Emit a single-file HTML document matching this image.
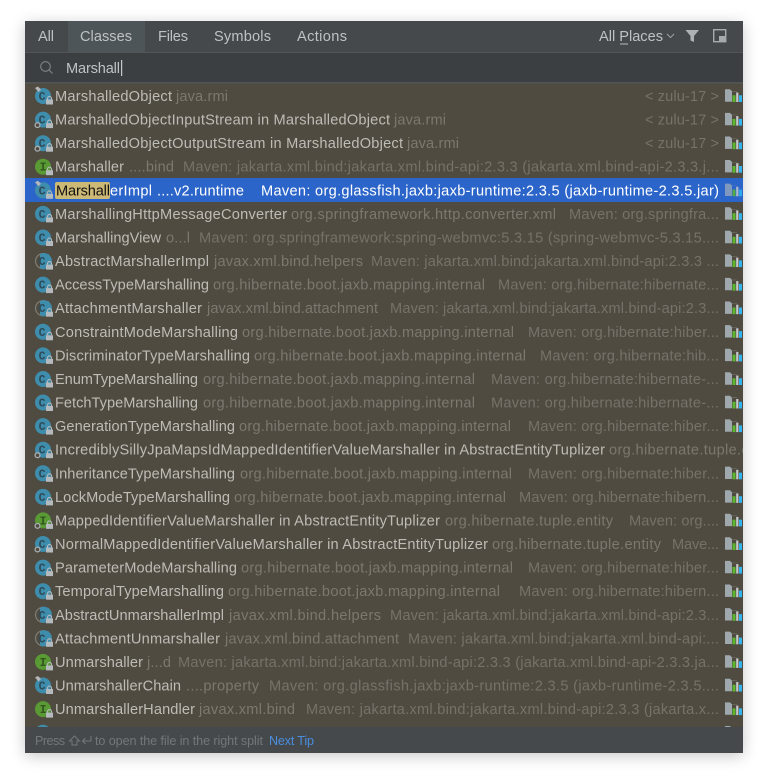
<!DOCTYPE html>
<html><head><meta charset="utf-8"><title>Search Everywhere</title>
<style>
html,body{margin:0;padding:0;background:#fff;width:768px;height:782px;overflow:hidden}
#w{position:absolute;left:25px;top:21px;width:718px;height:732px;background:#504b40;box-shadow:0 3px 14px rgba(0,0,0,.22)}
svg{position:absolute;left:0;top:0;filter:blur(.35px)}
text{font-family:"Liberation Sans",sans-serif;font-size:14.6px}
.t{fill:#bfc2c3}.n{fill:#bebcb6}.p{fill:#7b7870}.m{fill:#75726a}.w{fill:#fff}.k{fill:#111}
.f{font-size:12.6px;fill:#73777a}
</style></head><body><div id="w"></div>
<svg width="768" height="782" viewBox="0 0 768 782" xmlns="http://www.w3.org/2000/svg">
<defs>
<clipPath id="cp"><rect x="25" y="83" width="718" height="644"/></clipPath>
<g id="lk"><path d="M47.5 3.5v-1a2 2 0 0 1 4 0v1" fill="none" stroke="#b4babd" stroke-width="1.1"/><rect x="46" y="3.5" width="7" height="5" fill="#b4babd"/></g>
<g id="c"><circle cx="43" cy="0" r="8" fill="#3f8dac"/><text x="38.6" y="4" style="font-size:11.5px;font-family:'Liberation Mono',monospace;font-weight:bold" fill="#2d4a58">C</text><use href="#lk"/></g>
<g id="i"><circle cx="43" cy="0" r="8" fill="#5a9a35"/><text x="39.6" y="4" style="font-size:11.5px;font-family:'Liberation Mono',monospace;font-weight:bold" fill="#33551e">I</text><use href="#lk"/></g>
<g id="a"><circle cx="43" cy="0" r="7.5" fill="none" stroke="#7d7d78" stroke-width="1.2"/><path d="M41 -8h3a8 8 0 0 1 0 16h-3z" fill="#3f8dac"/><rect x="40" y="-7" width="9" height="14" fill="#3f8dac"/><text x="38.6" y="4" style="font-size:11.5px;font-family:'Liberation Mono',monospace;font-weight:bold" fill="#2d4a58">C</text><use href="#lk"/></g>
<path id="tg" d="M35 -8l3-1.5 3 3-2.5 2.5z" fill="#b4b8ba"/>
<g id="dt"><circle cx="37.5" cy="5.5" r="2.4" fill="#504b40" stroke="#a9afb3" stroke-width="1.3"/></g>
<g id="fo"><path d="M725 -6.700h5l2 2h5v10.400h-12z" fill="#9ea8ad"/><rect x="732" y="-4.500" width="10" height="10.500" fill="#504b40"/><rect x="732.500" y="-.7" width="3" height="6.700" fill="#5cb82e"/><rect x="736.200" y="-3.500" width="2.200" height="9.500" fill="#c8cbcc"/><rect x="739" y="-.7" width="3" height="6.700" fill="#2fb4f0"/></g>
</defs>

<!-- header -->
<rect x="25" y="21" width="718" height="31" fill="#45494b"/>
<rect x="68" y="21" width="77" height="31" fill="#4e5558"/>
<rect x="25" y="52" width="718" height="1.5" fill="#515557"/>
<rect x="25" y="53" width="718" height="29" fill="#3b3f42"/>
<rect x="25" y="82" width="718" height="1.5" fill="#505457"/>
<text class="t" x="38" y="41" textLength="16">All</text>
<text class="t" x="80" y="41" textLength="52">Classes</text>
<text class="t" x="158" y="41" textLength="30">Files</text>
<text class="t" x="214" y="41" textLength="57">Symbols</text>
<text class="t" x="297" y="41" textLength="50">Actions</text>
<text class="t" x="599" y="41" textLength="64">All Places</text>
<rect x="620" y="43.5" width="8" height="1" fill="#b9bcbd"/>
<path d="M667 34l3.500 3.500 3.500-3.500" fill="none" stroke="#9a9ea0" stroke-width="1.100"/>
<path d="M685.500 30h13.500l-5 6v6l-3.500-1.500v-4.500z" fill="#aeb2b4"/>
<rect x="713.700" y="29.700" width="12" height="12" fill="none" stroke="#a6aaac" stroke-width="1.400"/>
<rect x="719" y="36" width="6" height="5" fill="#a6aaac"/>

<!-- search -->
<circle cx="45.500" cy="66.500" r="4.800" fill="none" stroke="#7e8285" stroke-width="1.100"/>
<path d="M49 70l3.500 3.500" stroke="#7e8285" stroke-width="1.200"/>
<text class="t" x="66" y="73" textLength="54">Marshall</text>
<rect x="121" y="60" width="1.200" height="16" fill="#c5c8c9"/>

<!-- selection -->
<rect x="25" y="178" width="718" height="24" fill="#2c65c9"/>
<rect x="55" y="182" width="55" height="17" rx="2" fill="#cdb976"/>

<g clip-path="url(#cp)">
<g transform="translate(0,96)"><use href="#c"/><use href="#tg"/><text class="n" x="55" y="5" textLength="117">MarshalledObject</text><text class="p" x="176" y="5" textLength="52">java.rmi</text><text class="m" x="645" y="5" textLength="74">&lt; zulu-17 &gt;</text><use href="#fo"/></g>
<g transform="translate(0,119.6)"><use href="#c"/><use href="#dt"/><text class="n" x="55" y="5" textLength="335">MarshalledObjectInputStream in MarshalledObject</text><text class="p" x="394" y="5" textLength="52">java.rmi</text><text class="m" x="645" y="5" textLength="74">&lt; zulu-17 &gt;</text><use href="#fo"/></g>
<g transform="translate(0,143.2)"><use href="#c"/><use href="#dt"/><text class="n" x="55" y="5" textLength="348">MarshalledObjectOutputStream in MarshalledObject</text><text class="p" x="407" y="5" textLength="52">java.rmi</text><text class="m" x="645" y="5" textLength="74">&lt; zulu-17 &gt;</text><use href="#fo"/></g>
<g transform="translate(0,166.7)"><use href="#i"/><text class="n" x="55" y="5" textLength="69">Marshaller</text><text class="p" x="129" y="5" textLength="45">....bind</text><text class="m" x="183" y="5" textLength="536">Maven: jakarta.xml.bind:jakarta.xml.bind-api:2.3.3 (jakarta.xml.bind-api-2.3.3.j...</text><use href="#fo"/></g>
<g transform="translate(0,190.3)"><use href="#c"/><use href="#tg"/><text class="k" x="56" y="5" textLength="54">Marshall</text><text class="w" x="110" y="5" textLength="42">erImpl</text><text class="w" x="157" y="5" textLength="87">....v2.runtime</text><text class="w" x="261" y="5" textLength="458">Maven: org.glassfish.jaxb:jaxb-runtime:2.3.5 (jaxb-runtime-2.3.5.jar)</text><g opacity=".85"><path d="M725 -6.700h5l2 2h5v10.400h-12z" fill="#8ea2bd"/><rect x="732" y="-4.500" width="10" height="10.500" fill="#2c65c9"/><rect x="732.500" y="-.7" width="3" height="6.700" fill="#5cb82e"/><rect x="736.200" y="-3.500" width="2.200" height="9.500" fill="#c8cbcc"/><rect x="739" y="-.7" width="3" height="6.700" fill="#2fb4f0"/></g></g>
<g transform="translate(0,213.9)"><use href="#c"/><text class="n" x="55" y="5" textLength="232">MarshallingHttpMessageConverter</text><text class="p" x="291" y="5" textLength="265">org.springframework.http.converter.xml</text><text class="m" x="569" y="5" textLength="150">Maven: org.springfra...</text><use href="#fo"/></g>
<g transform="translate(0,237.5)"><use href="#c"/><text class="n" x="55" y="5" textLength="106">MarshallingView</text><text class="p" x="166" y="5" textLength="24">o...l</text><text class="m" x="199" y="5" textLength="520">Maven: org.springframework:spring-webmvc:5.3.15 (spring-webmvc-5.3.15....</text><use href="#fo"/></g>
<g transform="translate(0,261.1)"><use href="#a"/><text class="n" x="55" y="5" textLength="154">AbstractMarshallerImpl</text><text class="p" x="214" y="5" textLength="149">javax.xml.bind.helpers</text><text class="m" x="371" y="5" textLength="348">Maven: jakarta.xml.bind:jakarta.xml.bind-api:2.3.3 ...</text><use href="#fo"/></g>
<g transform="translate(0,284.6)"><use href="#c"/><text class="n" x="55" y="5" textLength="154">AccessTypeMarshalling</text><text class="p" x="213" y="5" textLength="272">org.hibernate.boot.jaxb.mapping.internal</text><text class="m" x="498" y="5" textLength="221">Maven: org.hibernate:hibernate...</text><use href="#fo"/></g>
<g transform="translate(0,308.2)"><use href="#a"/><text class="n" x="55" y="5" textLength="147">AttachmentMarshaller</text><text class="p" x="207" y="5" textLength="171">javax.xml.bind.attachment</text><text class="m" x="390" y="5" textLength="329">Maven: jakarta.xml.bind:jakarta.xml.bind-api:2.3...</text><use href="#fo"/></g>
<g transform="translate(0,331.8)"><use href="#c"/><text class="n" x="55" y="5" textLength="183">ConstraintModeMarshalling</text><text class="p" x="242" y="5" textLength="272">org.hibernate.boot.jaxb.mapping.internal</text><text class="m" x="528" y="5" textLength="191">Maven: org.hibernate:hiber...</text><use href="#fo"/></g>
<g transform="translate(0,355.4)"><use href="#c"/><text class="n" x="55" y="5" textLength="195">DiscriminatorTypeMarshalling</text><text class="p" x="254" y="5" textLength="272">org.hibernate.boot.jaxb.mapping.internal</text><text class="m" x="540" y="5" textLength="179">Maven: org.hibernate:hib...</text><use href="#fo"/></g>
<g transform="translate(0,379)"><use href="#c"/><text class="n" x="55" y="5" textLength="143">EnumTypeMarshalling</text><text class="p" x="203" y="5" textLength="272">org.hibernate.boot.jaxb.mapping.internal</text><text class="m" x="491" y="5" textLength="228">Maven: org.hibernate:hibernate-...</text><use href="#fo"/></g>
<g transform="translate(0,402.5)"><use href="#c"/><text class="n" x="55" y="5" textLength="143">FetchTypeMarshalling</text><text class="p" x="203" y="5" textLength="272">org.hibernate.boot.jaxb.mapping.internal</text><text class="m" x="491" y="5" textLength="228">Maven: org.hibernate:hibernate-...</text><use href="#fo"/></g>
<g transform="translate(0,426.1)"><use href="#c"/><text class="n" x="55" y="5" textLength="180">GenerationTypeMarshalling</text><text class="p" x="239" y="5" textLength="272">org.hibernate.boot.jaxb.mapping.internal</text><text class="m" x="528" y="5" textLength="191">Maven: org.hibernate:hiber...</text><use href="#fo"/></g>
<g transform="translate(0,449.7)"><use href="#c"/><use href="#dt"/><text class="n" x="55" y="5" textLength="550">IncrediblySillyJpaMapsIdMappedIdentifierValueMarshaller in AbstractEntityTuplizer</text><text class="p" x="609" y="5" textLength="169">org.hibernate.tuple.entity</text></g>
<g transform="translate(0,473.3)"><use href="#c"/><text class="n" x="55" y="5" textLength="180">InheritanceTypeMarshalling</text><text class="p" x="240" y="5" textLength="272">org.hibernate.boot.jaxb.mapping.internal</text><text class="m" x="528" y="5" textLength="191">Maven: org.hibernate:hiber...</text><use href="#fo"/></g>
<g transform="translate(0,496.9)"><use href="#c"/><text class="n" x="55" y="5" textLength="175">LockModeTypeMarshalling</text><text class="p" x="234" y="5" textLength="272">org.hibernate.boot.jaxb.mapping.internal</text><text class="m" x="519" y="5" textLength="200">Maven: org.hibernate:hibern...</text><use href="#fo"/></g>
<g transform="translate(0,520.4)"><use href="#i"/><use href="#dt"/><text class="n" x="55" y="5" textLength="385">MappedIdentifierValueMarshaller in AbstractEntityTuplizer</text><text class="p" x="445" y="5" textLength="168">org.hibernate.tuple.entity</text><text class="m" x="629" y="5" textLength="90">Maven: org....</text><use href="#fo"/></g>
<g transform="translate(0,544)"><use href="#c"/><use href="#dt"/><text class="n" x="55" y="5" textLength="433">NormalMappedIdentifierValueMarshaller in AbstractEntityTuplizer</text><text class="p" x="492" y="5" textLength="169">org.hibernate.tuple.entity</text><text class="m" x="672" y="5" textLength="47">Mave...</text><use href="#fo"/></g>
<g transform="translate(0,567.6)"><use href="#c"/><text class="n" x="55" y="5" textLength="182">ParameterModeMarshalling</text><text class="p" x="241" y="5" textLength="272">org.hibernate.boot.jaxb.mapping.internal</text><text class="m" x="528" y="5" textLength="191">Maven: org.hibernate:hiber...</text><use href="#fo"/></g>
<g transform="translate(0,591.2)"><use href="#c"/><text class="n" x="55" y="5" textLength="169">TemporalTypeMarshalling</text><text class="p" x="228" y="5" textLength="272">org.hibernate.boot.jaxb.mapping.internal</text><text class="m" x="519" y="5" textLength="200">Maven: org.hibernate:hibern...</text><use href="#fo"/></g>
<g transform="translate(0,614.8)"><use href="#a"/><text class="n" x="55" y="5" textLength="169">AbstractUnmarshallerImpl</text><text class="p" x="229" y="5" textLength="152">javax.xml.bind.helpers</text><text class="m" x="390" y="5" textLength="329">Maven: jakarta.xml.bind:jakarta.xml.bind-api:2.3...</text><use href="#fo"/></g>
<g transform="translate(0,638.3)"><use href="#a"/><text class="n" x="55" y="5" textLength="165">AttachmentUnmarshaller</text><text class="p" x="225" y="5" textLength="174">javax.xml.bind.attachment</text><text class="m" x="408" y="5" textLength="311">Maven: jakarta.xml.bind:jakarta.xml.bind-api:...</text><use href="#fo"/></g>
<g transform="translate(0,661.9)"><use href="#i"/><text class="n" x="55" y="5" textLength="88">Unmarshaller</text><text class="p" x="147" y="5" textLength="24">j...d</text><text class="m" x="178" y="5" textLength="541">Maven: jakarta.xml.bind:jakarta.xml.bind-api:2.3.3 (jakarta.xml.bind-api-2.3.3.ja...</text><use href="#fo"/></g>
<g transform="translate(0,685.5)"><use href="#c"/><use href="#tg"/><text class="n" x="55" y="5" textLength="126">UnmarshallerChain</text><text class="p" x="186" y="5" textLength="73">....property</text><text class="m" x="269" y="5" textLength="450">Maven: org.glassfish.jaxb:jaxb-runtime:2.3.5 (jaxb-runtime-2.3.5....</text><use href="#fo"/></g>
<g transform="translate(0,709.1)"><use href="#i"/><text class="n" x="55" y="5" textLength="140">UnmarshallerHandler</text><text class="p" x="199" y="5" textLength="96">javax.xml.bind</text><text class="m" x="306" y="5" textLength="413">Maven: jakarta.xml.bind:jakarta.xml.bind-api:2.3.3 (jakarta.x...</text><use href="#fo"/></g>
<g transform="translate(0,732.7)"><use href="#c"/><use href="#fo"/></g>
</g>

<!-- footer -->
<rect x="25" y="727" width="718" height="26" fill="#45494b"/>
<text class="f" x="35" y="745" textLength="30">Press</text>
<path d="M69.500 741l5-5 5 5h-2.500v4h-5v-4z" fill="none" stroke="#73777a" stroke-width="1"/>
<path d="M91 736v5h-8M85.500 738l-3 3 3 3" fill="none" stroke="#73777a" stroke-width="1"/>
<text class="f" x="95" y="745" textLength="168">to open the file in the right split</text>
<text class="f" x="269" y="745" textLength="45" style="fill:#4a8ee0">Next Tip</text>
</svg>
</body></html>
